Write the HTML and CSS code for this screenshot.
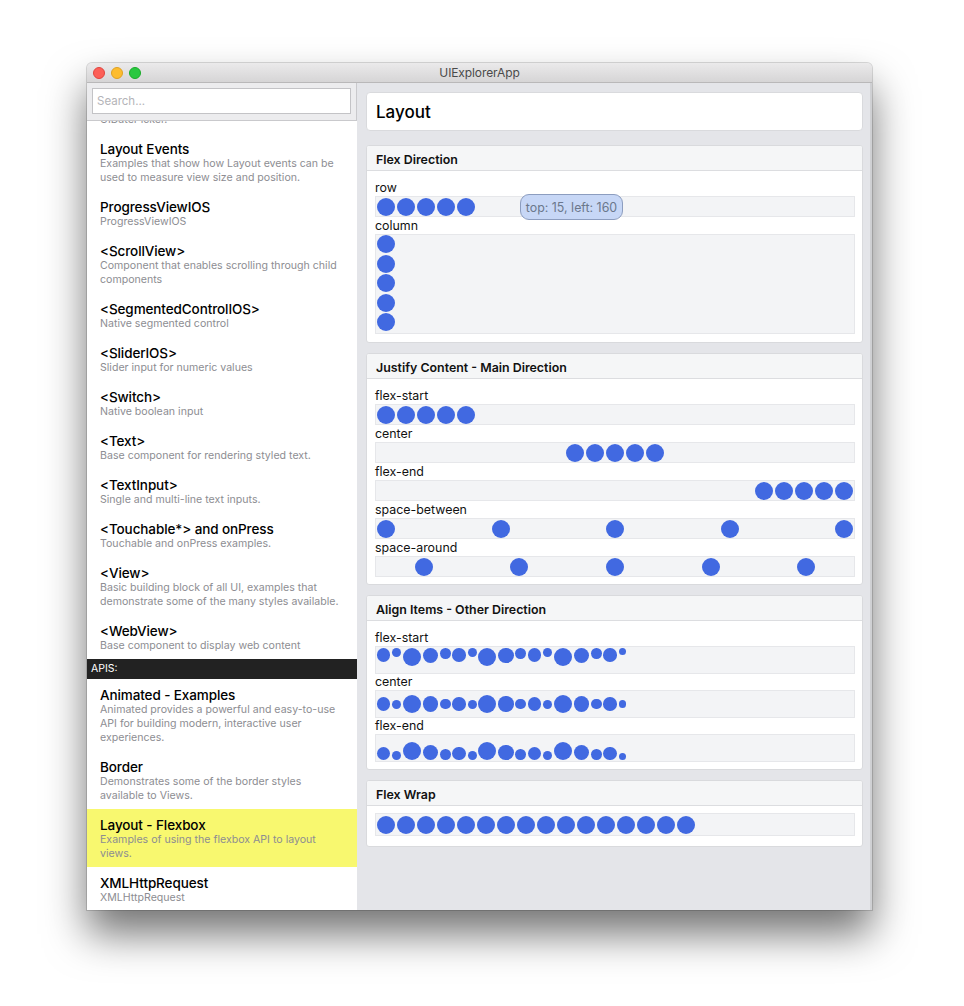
FILE: index.html
```html
<!DOCTYPE html>
<html>
<head>
<meta charset="utf-8">
<link rel="stylesheet" href="styles.css">
</head>
<body>
<div class="window">
  <div class="titlebar">
    <div class="lights">
      <span class="light red"></span>
      <span class="light yellow"></span>
      <span class="light green"></span>
    </div>
    <div class="title">UIExplorerApp</div>
    <div></div>
  </div>
  <div class="app">
    <aside class="sidebar">
      <div class="search"><input class="search-input" type="text" placeholder="Search..."></div>
      <div class="list">
        <div class="list-inner">
          <div class="item"><div class="item-title">&lt;DatePickerIOS&gt;</div><div class="item-desc">Select dates and times using the native<br>UIDatePicker.</div></div>
          <div class="item"><div class="item-title">Layout Events</div><div class="item-desc">Examples that show how Layout events can be<br>used to measure view size and position.</div></div>
          <div class="item"><div class="item-title">ProgressViewIOS</div><div class="item-desc">ProgressViewIOS</div></div>
          <div class="item"><div class="item-title">&lt;ScrollView&gt;</div><div class="item-desc">Component that enables scrolling through child<br>components</div></div>
          <div class="item"><div class="item-title">&lt;SegmentedControlIOS&gt;</div><div class="item-desc">Native segmented control</div></div>
          <div class="item"><div class="item-title">&lt;SliderIOS&gt;</div><div class="item-desc">Slider input for numeric values</div></div>
          <div class="item"><div class="item-title">&lt;Switch&gt;</div><div class="item-desc">Native boolean input</div></div>
          <div class="item"><div class="item-title">&lt;Text&gt;</div><div class="item-desc">Base component for rendering styled text.</div></div>
          <div class="item"><div class="item-title">&lt;TextInput&gt;</div><div class="item-desc">Single and multi-line text inputs.</div></div>
          <div class="item"><div class="item-title">&lt;Touchable*&gt; and onPress</div><div class="item-desc">Touchable and onPress examples.</div></div>
          <div class="item"><div class="item-title">&lt;View&gt;</div><div class="item-desc">Basic building block of all UI, examples that<br>demonstrate some of the many styles available.</div></div>
          <div class="item"><div class="item-title">&lt;WebView&gt;</div><div class="item-desc">Base component to display web content</div></div>
          <div class="section-header">APIS:</div>
          <div class="item"><div class="item-title">Animated - Examples</div><div class="item-desc">Animated provides a powerful and easy-to-use<br>API for building modern, interactive user<br>experiences.</div></div>
          <div class="item"><div class="item-title">Border</div><div class="item-desc">Demonstrates some of the border styles<br>available to Views.</div></div>
          <div class="item selected"><div class="item-title">Layout - Flexbox</div><div class="item-desc">Examples of using the flexbox API to layout<br>views.</div></div>
          <div class="item"><div class="item-title">XMLHttpRequest</div><div class="item-desc">XMLHttpRequest</div></div>
        </div>
      </div>
    </aside>
    <main class="content">
      <div class="page-title">Layout</div>

      <section class="block first">
        <div class="block-header">Flex Direction</div>
        <div class="block-body">
          <div class="label">row</div>
          <div class="box row-box has-tip">
            <span class="c"></span><span class="c"></span><span class="c"></span><span class="c"></span><span class="c"></span>
            <div class="tip">top: 15, left: 160</div>
          </div>
          <div class="label">column</div>
          <div class="box column-box last">
            <span class="c"></span><span class="c"></span><span class="c"></span><span class="c"></span><span class="c"></span>
          </div>
        </div>
      </section>

      <section class="block">
        <div class="block-header">Justify Content - Main Direction</div>
        <div class="block-body tight">
          <div class="label">flex-start</div>
          <div class="box row-box jc-start">
            <span class="c"></span><span class="c"></span><span class="c"></span><span class="c"></span><span class="c"></span>
          </div>
          <div class="label">center</div>
          <div class="box row-box jc-center">
            <span class="c"></span><span class="c"></span><span class="c"></span><span class="c"></span><span class="c"></span>
          </div>
          <div class="label">flex-end</div>
          <div class="box row-box jc-end">
            <span class="c"></span><span class="c"></span><span class="c"></span><span class="c"></span><span class="c"></span>
          </div>
          <div class="label">space-between</div>
          <div class="box row-box jc-between">
            <span class="c"></span><span class="c"></span><span class="c"></span><span class="c"></span><span class="c"></span>
          </div>
          <div class="label">space-around</div>
          <div class="box row-box jc-around last">
            <span class="c"></span><span class="c"></span><span class="c"></span><span class="c"></span><span class="c"></span>
          </div>
        </div>
      </section>

      <section class="block">
        <div class="block-header">Align Items - Other Direction</div>
        <div class="block-body tight">
          <div class="label">flex-start</div>
          <div class="box align-box ai-start">
            <span class="c s15"></span><span class="c s10"></span><span class="c s20"></span><span class="c s17"></span><span class="c s12"></span><span class="c s15"></span><span class="c s10"></span><span class="c s20"></span><span class="c s17"></span><span class="c s12"></span><span class="c s15"></span><span class="c s10"></span><span class="c s20"></span><span class="c s17"></span><span class="c s12"></span><span class="c s15"></span><span class="c s8"></span>
          </div>
          <div class="label">center</div>
          <div class="box align-box ai-center">
            <span class="c s15"></span><span class="c s10"></span><span class="c s20"></span><span class="c s17"></span><span class="c s12"></span><span class="c s15"></span><span class="c s10"></span><span class="c s20"></span><span class="c s17"></span><span class="c s12"></span><span class="c s15"></span><span class="c s10"></span><span class="c s20"></span><span class="c s17"></span><span class="c s12"></span><span class="c s15"></span><span class="c s8"></span>
          </div>
          <div class="label">flex-end</div>
          <div class="box align-box ai-end last">
            <span class="c s15"></span><span class="c s10"></span><span class="c s20"></span><span class="c s17"></span><span class="c s12"></span><span class="c s15"></span><span class="c s10"></span><span class="c s20"></span><span class="c s17"></span><span class="c s12"></span><span class="c s15"></span><span class="c s10"></span><span class="c s20"></span><span class="c s17"></span><span class="c s12"></span><span class="c s15"></span><span class="c s8"></span>
          </div>
        </div>
      </section>

      <section class="block">
        <div class="block-header">Flex Wrap</div>
        <div class="block-body wrap-body">
          <div class="box row-box wrap-box last">
            <span class="c"></span><span class="c"></span><span class="c"></span><span class="c"></span><span class="c"></span><span class="c"></span><span class="c"></span><span class="c"></span><span class="c"></span><span class="c"></span><span class="c"></span><span class="c"></span><span class="c"></span><span class="c"></span><span class="c"></span><span class="c"></span>
          </div>
        </div>
      </section>
    </main>
  </div>
</div>
</body>
</html>
```

FILE: styles.css
```css
html, body {
  margin: 0;
  padding: 0;
  background: #ffffff;
}
body {
  box-sizing: border-box;
  min-height: 1006px;
  padding: 63px 0 0 87px;
  font-family: Inter, "Noto Sans", "Liberation Sans", sans-serif;
  color: #111;
}
.window {
  width: 785px;
  height: 847px;
  display: flex;
  flex-direction: column;
  border-radius: 5px 5px 0 0;
  box-shadow: 0 24px 42px rgba(0, 0, 0, 0.55), 0 0 0 1px rgba(0, 0, 0, 0.14);
  overflow: hidden;
  background: #e4e5e9;
}
.titlebar {
  height: 19px;
  flex: 0 0 19px;
  border-bottom: 1px solid #b9b8b9;
  background: linear-gradient(#ebeaeb, #d6d5d6);
  display: grid;
  grid-template-columns: 1fr auto 1fr;
  align-items: center;
}
.lights {
  display: flex;
  gap: 6px;
  padding-left: 6px;
}
.light {
  width: 12px;
  height: 12px;
  border-radius: 50%;
  box-sizing: border-box;
}
.red { background: #fc5f57; border: 0.5px solid #e0443e; }
.yellow { background: #fdbc2e; border: 0.5px solid #dea123; }
.green { background: #29c840; border: 0.5px solid #1aab29; }
.title {
  font-size: 12px;
  color: #4a4a4a;
  letter-spacing: -0.1px;
}
.app {
  flex: 1;
  display: flex;
  min-height: 0;
}
.sidebar {
  width: 270px;
  flex: 0 0 270px;
  background: #ffffff;
  display: flex;
  flex-direction: column;
  overflow: hidden;
}
.search {
  height: 38px;
  flex: 0 0 38px;
  box-sizing: border-box;
  border-bottom: 1px solid #c9c9cc;
  border-right: 1px solid #c9c9cc;
  background: #ececee;
  padding: 5px 5px 0 5px;
}
.search-input {
  display: block;
  width: 100%;
  height: 26px;
  box-sizing: border-box;
  border: 1px solid #c3c3c6;
  background: #ffffff;
  padding: 0 4px;
  font-family: Inter, "Noto Sans", sans-serif;
  font-size: 11.5px;
  color: #333;
  outline: none;
  margin: 0;
}
.search-input::placeholder {
  color: #b4b4b8;
}
.list {
  flex: 1;
  overflow: hidden;
}
.list-inner {
  margin-top: -46px;
}
.item {
  padding: 8px 13px 6px;
}
.item.selected {
  background: #f8f86f;
}
.item-title {
  font-size: 13.5px;
  line-height: 16px;
  font-weight: 500;
  color: #000;
  letter-spacing: -0.1px;
}
.item-desc {
  font-size: 10.6px;
  line-height: 14px;
  color: #8d8d92;
}
.section-header {
  height: 20px;
  background: #222222;
  color: #ffffff;
  font-size: 10.5px;
  line-height: 20px;
  padding-left: 4px;
}
.content {
  flex: 1;
  padding: 9px 9px 0;
  overflow: hidden;
  box-shadow: inset -2px 0 0 #cfd0d3;
}
.page-title {
  height: 39px;
  box-sizing: border-box;
  background: #ffffff;
  border: 1px solid #d9dadd;
  border-radius: 4px;
  display: flex;
  align-items: center;
  padding-left: 9px;
  font-size: 17px;
  font-weight: 500;
  color: #000;
}
.block {
  background: #ffffff;
  border: 1px solid #d9dadd;
  border-radius: 3px;
  margin-top: 10px;
  overflow: hidden;
}
.block.first {
  margin-top: 14px;
}
.block-header {
  height: 23px;
  padding-top: 1px;
  line-height: 25px;
  background: #f5f6f7;
  border-bottom: 1px solid #dcdde0;
  padding-left: 9px;
  font-size: 12.4px;
  font-weight: 600;
  color: #111;
}
.block-body {
  padding: 9px 7px 8px 8px;
}
.block-body.tight {
  padding-bottom: 7px;
}
.wrap-body {
  padding-top: 7px;
  padding-bottom: 10px;
}
.label {
  font-size: 12.4px;
  line-height: 16px;
  color: #111;
}
.box {
  box-sizing: border-box;
  background: #f3f4f6;
  border: 1px solid #e6e7ea;
  display: flex;
  margin-bottom: 1px;
}
.box.last {
  margin-bottom: 0;
}
.row-box {
  flex-direction: row;
  height: 21px;
  padding-top: 1px;
  align-items: flex-start;
}
.wrap-box {
  height: 23px;
  padding-top: 2px;
}
.has-tip {
  position: relative;
}
.column-box {
  flex-direction: column;
  height: 100px;
}
.c {
  display: block;
  width: 18px;
  height: 18px;
  border-radius: 50%;
  background: #4169e1;
  margin: 0 1px;
  flex: 0 0 auto;
}
.column-box .c {
  margin: 0 1px 1.6px;
}
.jc-start { justify-content: flex-start; }
.jc-center { justify-content: center; }
.jc-end { justify-content: flex-end; }
.jc-between { justify-content: space-between; }
.jc-around { justify-content: space-around; }
.align-box {
  height: 28px;
  padding: 1px 0;
  margin-bottom: 0;
}
.align-box .c {
  margin: 0 0.9px;
}
.ai-start { align-items: flex-start; }
.ai-center { align-items: center; }
.ai-end { align-items: flex-end; }
.s15 { width: 13.5px; height: 13.5px; }
.s10 { width: 9px; height: 9px; }
.s20 { width: 18px; height: 18px; }
.s17 { width: 15.3px; height: 15.3px; }
.s12 { width: 10.8px; height: 10.8px; }
.s8 { width: 7.2px; height: 7.2px; }
.tip {
  position: absolute;
  left: 144px;
  top: -3px;
  width: 103px;
  height: 26px;
  box-sizing: border-box;
  border: 1px solid #8c9dbf;
  border-radius: 9px;
  background: #c7d7f6;
  color: #6b778c;
  font-size: 12.4px;
  display: flex;
  align-items: center;
  justify-content: center;
}
```
